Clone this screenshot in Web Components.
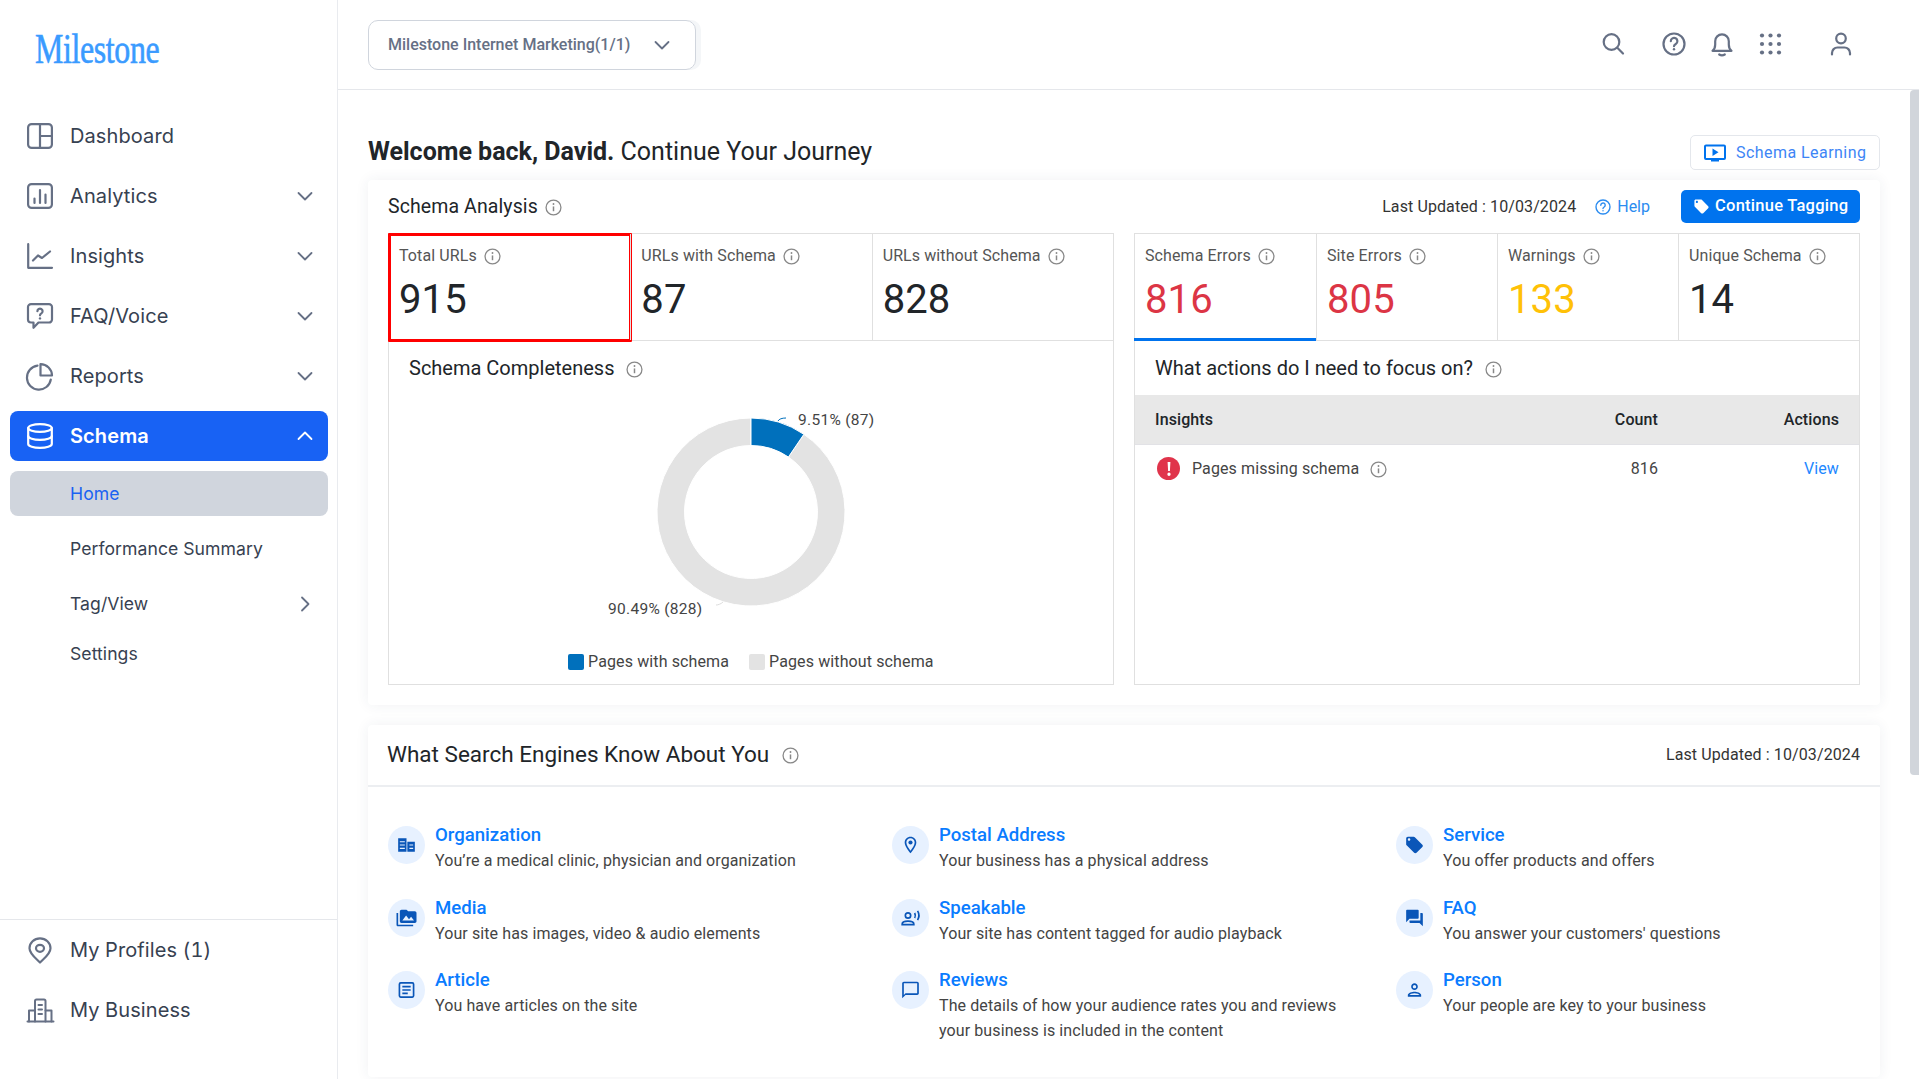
<!DOCTYPE html>
<html lang="en">
<head>
<meta charset="utf-8">
<title>Schema Home</title>
<style>
html,body{margin:0;padding:0;background:#fff;height:100%;overflow:hidden;font-family:Roboto,"Liberation Sans",sans-serif}
</style>
</head>
<body>
<ms-app>
  <ms-sidebar slot="side">
    <ms-nav-item icon="dashboard">Dashboard</ms-nav-item>
    <ms-nav-item icon="analytics" chevron="down">Analytics</ms-nav-item>
    <ms-nav-item icon="insights" chevron="down">Insights</ms-nav-item>
    <ms-nav-item icon="faq" chevron="down">FAQ/Voice</ms-nav-item>
    <ms-nav-item icon="reports" chevron="down">Reports</ms-nav-item>
    <ms-nav-item icon="schema" chevron="up" active>Schema</ms-nav-item>
    <ms-sub-item selected>Home</ms-sub-item>
    <ms-sub-item>Performance Summary</ms-sub-item>
    <ms-sub-item chevron tight>Tag/View</ms-sub-item>
    <ms-sub-item>Settings</ms-sub-item>
    <ms-nav-item slot="foot" icon="pin">My Profiles (1)</ms-nav-item>
    <ms-nav-item slot="foot" icon="business">My Business</ms-nav-item>
  </ms-sidebar>
  <ms-topbar slot="top"></ms-topbar>
  <ms-welcome></ms-welcome>
  <ms-analysis></ms-analysis>
  <ms-engines></ms-engines>
</ms-app>
<script>
const S='stroke="currentColor" fill="none" stroke-linecap="round" stroke-linejoin="round"';
const NAV={
 dashboard:`<g ${S} stroke-width="2.2"><rect x="1.1" y="1.1" width="23.8" height="23.8" rx="3.5"/><path d="M13 1.1V24.9M13 13H24.9"/></g>`,
 analytics:`<g ${S} stroke-width="2.2"><rect x="1.1" y="1.1" width="23.8" height="23.8" rx="3.5"/><path d="M7.5 15.5V20M13 7V20M18.5 11.5V20"/></g>`,
 insights:`<g ${S} stroke-width="2.2"><path d="M1.2 1.2V24.8H25"/><path d="M6 17.5L11 12.5L15 15L23 8.5"/></g>`,
 faq:`<g ${S} stroke-width="2.2"><path d="M4 1.1H22a3 3 0 0 1 3 3V16.5a3 3 0 0 1-3 3H11.5L6.5 24.8V19.5H4a3 3 0 0 1-3-3V4.1a3 3 0 0 1 3-3Z"/><path d="M10.4 8.2a2.6 2.6 0 1 1 4 2.2c-.9.6-1.4 1-1.4 1.9"/></g><circle cx="13" cy="15.4" r="1.2" fill="currentColor"/>`,
 reports:`<g ${S} stroke-width="2.2"><path d="M10.5 2.7A12 12 0 1 0 23.8 16.5"/><path d="M13.5 1.1A11.5 11.5 0 0 1 25 12.5H13.5Z"/></g>`,
 schema:`<g ${S} stroke-width="2.2"><ellipse cx="13" cy="5" rx="11.8" ry="3.9"/><path d="M1.2 5V21c0 2.2 5.3 3.9 11.8 3.9S24.8 23.2 24.8 21V5"/><path d="M1.2 13c0 2.2 5.3 3.9 11.8 3.9S24.8 15.2 24.8 13"/></g>`,
 pin:`<g ${S} stroke-width="2.2"><path d="M13 25.5C9 21.5 2.5 17 2.5 11.3a10.5 10 0 0 1 21 0C23.500 17 17 21.500 13 25.500Z"/><ellipse cx="13" cy="11.300" rx="4" ry="3.500"/></g>`,
 business:`<g ${S} stroke-width="2"><path d="M.5 24.500H26.500"/><path d="M2 24.500V13.500H8M24.500 24.500V13.500H18.500"/><path d="M8 24.500V4a1.500 1.500 0 0 1 1.500-1.500h7.500a1.500 1.500 0 0 1 1.500 1.500V24.500"/><path d="M11.500 8h3.500M11.500 12.500h3.500M11.500 17h3.500"/></g>`
};
const TOP={
 search:`<g ${S} stroke-width="2.2"><circle cx="10.500" cy="10" r="7.800"/><path d="M16.300 15.800L22 21.500"/></g>`,
 help:`<g ${S} stroke-width="2.2"><circle cx="12" cy="12" r="10.500"/><path d="M8.800 9.200a3.300 3.300 0 1 1 5 2.800c-1.100.7-1.800 1.200-1.800 2.200"/></g><circle cx="12" cy="17.200" r="1.200" fill="currentColor"/>`,
 bell:`<g ${S} stroke-width="2.2"><path d="M2.500 18.800c1.900-1.500 2.700-3.500 2.700-6.300V9.200a6.800 6.800 0 0 1 13.600 0v3.300c0 2.800.8 4.800 2.700 6.300Z"/><path d="M9.200 22.500c1.600 1 4 1 5.600 0"/></g>`,
 apps:`<g fill="currentColor">${[3,11.500,20].flatMap(y=>[3,11.500,20].map(x=>`<circle cx="${x}" cy="${y+.5}" r="2.100"/>`)).join('')}</g>`,
 user:`<g ${S} stroke-width="2.2"><circle cx="12" cy="6.500" r="4.800"/><path d="M3 22.500V21a5.500 5.500 0 0 1 5.500-5.500h7A5.500 5.500 0 0 1 21 21v1.500"/></g>`
};
const M={
 org:`<path fill="currentColor" d="M2 4h10v16H2zM13 8h9v12h-9z"/><path stroke="#e7f1ff" stroke-width="1.300" fill="none" d="M4 8h6M4 12h6M4 16h6M15.500 12h4.500M15.500 16h4.500"/>`,
 media:`<path fill="currentColor" d="M2 6H0v5h.01L0 20c0 1.100.9 2 2 2h18v-2H2V6zm20-2h-8l-2-2H6c-1.100 0-1.990.9-1.990 2L4 16c0 1.100.9 2 2 2h16c1.100 0 2-.9 2-2V6c0-1.100-.9-2-2-2zM7 15l4.500-6 3.500 4.510 2.500-3.010L21 15H7z"/>`,
 article:`<g fill="none" stroke="currentColor" stroke-width="2"><rect x="3.500" y="3.500" width="17" height="17" rx="1.500"/><path d="M7 8h10M7 12h10M7 16h6.500"/></g>`,
 place:`<path fill="currentColor" d="M12 2C8.130 2 5 5.130 5 9c0 5.250 7 13 7 13s7-7.750 7-13c0-3.870-3.130-7-7-7zm0 2c2.760 0 5 2.240 5 5 0 2.880-2.880 7.190-5 9.880C9.920 16.210 7 11.850 7 9c0-2.760 2.240-5 5-5z"/><circle cx="12" cy="9" r="2.500" fill="currentColor"/>`,
 voice:`<g fill="none" stroke="currentColor" stroke-width="2"><circle cx="9" cy="9" r="3.200"/><path d="M2 20v-.8c0-2.200 3.500-3.400 7-3.400s7 1.200 7 3.400v.8Z"/><path d="M17 6c1 1.800 1 4.200 0 6M20.500 3.500c2 3.300 2 7.700 0 11"/></g>`,
 chat:`<path fill="currentColor" d="M20 2H4c-1.100 0-2 .9-2 2v18l4-4h14c1.100 0 2-.9 2-2V4c0-1.100-.9-2-2-2zm0 14H6l-2 2V4h16v12z"/>`,
 tag:`<path fill="currentColor" d="M21.410 11.580l-9-9C12.050 2.220 11.550 2 11 2H4c-1.100 0-2 .9-2 2v7c0 .55.22 1.050.59 1.420l9 9c.36.36.86.58 1.410.58.55 0 1.050-.22 1.410-.59l7-7c.37-.36.59-.86.59-1.410 0-.55-.23-1.060-.59-1.420zM5.500 7C4.670 7 4 6.330 4 5.500S4.670 4 5.500 4 7 4.670 7 5.500 6.330 7 5.500 7z"/>`,
 qa:`<path fill="currentColor" d="M21 6h-2v9H6v2c0 .55.45 1 1 1h11l4 4V7c0-.55-.45-1-1-1zm-4 6V3c0-.55-.45-1-1-1H3c-.55 0-1 .45-1 1v14l4-4h10c.55 0 1-.45 1-1z"/>`,
 person:`<path fill="currentColor" d="M12 6c1.100 0 2 .9 2 2s-.9 2-2 2-2-.9-2-2 .9-2 2-2m0 10c2.700 0 5.800 1.290 6 2H6c.23-.72 3.310-2 6-2m0-12C9.790 4 8 5.790 8 8s1.790 4 4 4 4-1.790 4-4-1.790-4-4-4zm0 10c-2.670 0-8 1.340-8 4v2h16v-2c0-2.660-5.330-4-8-4z"/>`
};
const chev=d=>`<svg width="16" height="16" viewBox="0 0 16 16" fill="none" stroke="currentColor" stroke-width="1.800" stroke-linecap="round" stroke-linejoin="round"><path d="${{down:'M1.500 5L8 11.500L14.500 5',up:'M1.500 11L8 4.500L14.500 11',right:'M5 1.500L11.500 8L5 14.500'}[d]}"/></svg>`;
const FONT='Roboto,"Liberation Sans",sans-serif';
class Base extends HTMLElement{
  connectedCallback(){ if(!this.shadowRoot){const r=this.attachShadow({mode:'open'});r.innerHTML=`<style>${this.css()}</style>${this.html()}`;} }
  css(){return ':host{display:block}'} html(){return '<slot></slot>'}
}
customElements.define('ms-app',class extends Base{
  css(){return `:host{display:flex;height:100vh;overflow:hidden;font-family:${FONT};color:#212529;background:#fff}
  .side{width:338px;flex:none}
  .main{flex:1;min-width:0;display:flex;flex-direction:column;position:relative;overflow:hidden}
  .content{padding:45px 39px 0 30px;display:flex;flex-direction:column}
  .thumb{position:absolute;right:0;top:90px;width:9px;height:685px;background:#d1d5db;border-radius:4px 0 0 4px}`}
  html(){return `<div class="side"><slot name="side"></slot></div><div class="main"><slot name="top"></slot><div class="content"><slot></slot></div><div class="thumb"></div></div>`}
});
customElements.define('ms-sidebar',class extends Base{
  css(){return `:host{display:flex;flex-direction:column;height:100vh;box-sizing:border-box;border-right:1px solid #e9ebef;background:#fff}
  .logo{height:111px;box-sizing:border-box;padding:24px 0 0 35px;overflow:hidden}
  .logo span{display:inline-block;font:400 42px/50px "Liberation Serif",serif;color:#3a9bff;transform:scaleX(.76);transform-origin:0 0;letter-spacing:-.5px;-webkit-text-stroke:.6px #3a9bff}
  nav{flex:1;padding:0 9px 0 10px}
  .foot{height:160px;box-sizing:border-box;border-top:1px solid #e5e7eb;padding:5px 9px 0 10px}`}
  html(){return `<div class="logo"><span>Milestone</span></div><nav><slot></slot></nav><div class="foot"><slot name="foot"></slot></div>`}
});
customElements.define('ms-nav-item',class extends Base{
  css(){return `:host{display:flex;align-items:center;height:50px;margin-bottom:10px;padding:0 15px 0 17px;border-radius:8px;color:#374151;font:400 20px/1 Inter,"Liberation Sans",sans-serif;letter-spacing:.1px;font-variant-numeric:tabular-nums}
  :host([active]){background:#1862f4;color:#fff;font-weight:600}
  .ic{width:26px;height:26px;flex:none;margin-right:17px;color:#667085;overflow:visible}
  :host([active]) .ic{color:#fff}
  .t{flex:1}.c{display:flex;color:#667085}:host([active]) .c{color:#fff}`}
  html(){const c=this.getAttribute('chevron');return `<svg class="ic" viewBox="0 0 26 26">${NAV[this.getAttribute('icon')]}</svg><span class="t"><slot></slot></span>${c?`<span class="c">${chev(c)}</span>`:''}`}
});
customElements.define('ms-sub-item',class extends Base{
  css(){return `:host{display:flex;align-items:center;height:45px;margin-bottom:10px;padding:0 15px 0 60px;border-radius:8px;color:#374151;font:400 17.600px/1 Inter,"Liberation Sans",sans-serif;letter-spacing:.05px}
  :host([selected]){background:#d0d5dd;color:#1a62f2}
  :host([tight]){margin-bottom:5px}
  .t{flex:1}.c{display:flex;color:#667085}`}
  html(){return `<span class="t"><slot></slot></span>${this.hasAttribute('chevron')?`<span class="c">${chev('right')}</span>`:''}`}
});
customElements.define('ms-topbar',class extends Base{
  css(){return `:host{display:flex;align-items:center;height:90px;box-sizing:border-box;border-bottom:1px solid #e5e7eb;padding:0 66px 1px 30px;flex:none}
  .dd{width:328px;height:50px;margin-top:1px;box-sizing:border-box;border:1.500px solid #d0d5dd;border-radius:10px;box-shadow:5px 0 0 #f4f6f8;display:flex;align-items:center;justify-content:space-between;padding:0 25px 0 19px;color:#667085;font:500 16px/1 ${FONT}}
  .chev{display:flex}
  .sp{flex:1}
  svg.i{width:24px;height:24px;color:#667085;flex:none;overflow:visible}`}
  html(){const i=(n,m)=>`<svg class="i" viewBox="0 0 24 24" style="margin-left:${m}px">${TOP[n]}</svg>`;
    return `<div class="dd"><span>Milestone Internet Marketing(1/1)</span><span class="chev">${chev('down')}</span></div><div class="sp"></div>${i('search',0)}${i('help',37)}${i('bell',24)}${i('apps',25)}${i('user',46)}`}
});
customElements.define('ms-info',class extends Base{
  css(){return `:host{display:inline-flex;width:17px;height:17px;color:#888;flex:none}`}
  html(){return `<svg width="17" height="17" viewBox="0 0 16 16"><circle cx="8" cy="8" r="7" fill="none" stroke="currentColor" stroke-width="1.200"/><path d="M8 7v4.500" stroke="currentColor" stroke-width="1.400"/><circle cx="8" cy="4.700" r=".9" fill="currentColor"/></svg>`}
});
customElements.define('ms-welcome',class extends Base{
  css(){return `:host{display:flex;align-items:center;justify-content:space-between;height:35px;margin-bottom:10px}
  h1{margin:-2px 0 0;font:400 25px/1 ${FONT};color:#212529}b{font-weight:700}
  .btn{display:flex;align-items:center;box-sizing:border-box;width:190px;height:35px;border:1px solid #e4e7ec;border-radius:5px;padding-left:13px;color:#3d85f6;font:400 16px/1 ${FONT};letter-spacing:.45px}
  svg{width:22px;height:20px;margin-right:10px;color:#0073ee}`}
  html(){return `<h1><b>Welcome back, David.</b> Continue Your Journey</h1><div class="btn"><svg viewBox="0 0 22 20"><path d="M2 2.500h18a1 1 0 0 1 1 1V15a1 1 0 0 1-1 1H2a1 1 0 0 1-1-1V3.500a1 1 0 0 1 1-1Z" fill="none" stroke="currentColor" stroke-width="2"/><path d="M8.500 5.500L14.500 9.200L8.500 13Z" fill="currentColor"/><path d="M7 16.500h8v2H7z" fill="currentColor"/></svg>Schema Learning</div>`}
});
customElements.define('ms-stat',class extends Base{
  css(){return `:host{display:block;box-sizing:border-box;height:106px;padding:10px 0 0 10px;border-left:1px solid #e0e0e0;position:relative}
  :host(:first-child){border-left:0}
  .l{display:flex;align-items:center;gap:7px;height:24px;font:400 16px/24px ${FONT};color:#555;letter-spacing:.1px}
  .v{font:400 40px/47px ${FONT};margin-top:8px;letter-spacing:.1px;color:var(--c,#212529)}
  :host([active])::after{content:"";position:absolute;left:-1px;right:0;bottom:-1px;height:3px;background:#0073ee}
  :host([box])::after{content:"";position:absolute;left:-1px;right:-2px;top:-1px;bottom:-2px;border:3px solid #f00;border-radius:1px}`}
  html(){return `<div class="l"><slot></slot><ms-info></ms-info></div><div class="v" style="--c:${this.getAttribute('color')||'#212529'}">${this.getAttribute('value')}</div>`}
});
customElements.define('ms-analysis',class extends Base{
  css(){return `:host{display:block;box-sizing:border-box;height:525px;padding:10px 20px 20px;box-shadow:0 0 14px rgba(40,60,90,.07);border-radius:4px;background:#fff}
  header{display:flex;align-items:center;height:33px;margin-bottom:10px}
  h2{margin:0;font:450 19.500px/1 ${FONT};color:#212529;letter-spacing:.1px}
  h2+ms-info{margin-left:7px;margin-top:2px}
  .sp{flex:1}
  .upd{font:400 16px/1 ${FONT};color:#333;letter-spacing:.1px}
  .help{display:flex;align-items:center;gap:6px;margin-left:19px;color:#2b8cf0;font:400 16px/1 ${FONT}}
  .help svg{width:16px;height:16px}
  .cta{display:flex;align-items:center;box-sizing:border-box;margin-left:31px;width:179px;height:33px;background:#0073ee;border-radius:5px;color:#fff;padding-left:12px;font:500 16.500px/1 ${FONT};letter-spacing:.25px}
  .cta svg{width:17px;height:17px;margin-right:5px}
  .grid{display:grid;grid-template-columns:726px 726px;column-gap:20px}
  .col{display:flex;flex-direction:column;height:452px}
  .stats{display:grid;border:1px solid #e0e0e0;height:108px;box-sizing:border-box}
  .stats.a{grid-template-columns:repeat(3,1fr)}.stats.b{grid-template-columns:repeat(4,1fr)}
  .panel{flex:1;border:1px solid #e0e0e0;border-top:0;display:flex;flex-direction:column}
  .pt{display:flex;align-items:center;height:54px;padding:0 20px;font:450 20px/1 ${FONT};color:#212529;box-sizing:border-box;gap:12px}
  .pt ms-info{margin-top:2px}
  .chart{position:relative;height:200px;margin-top:17px;flex:none}
  .chart svg{display:block;margin:0 auto}
  .lab{position:absolute;font:400 15.500px/18px ${FONT};color:#444;letter-spacing:.3px}
  .legend{display:flex;align-items:center;height:20px;margin-top:40px;padding-left:179px;font:400 16px/1 ${FONT};color:#444;letter-spacing:.12px}
  .sq{width:16px;height:16px;border-radius:2px;margin-right:4px;flex:none}
  .legend .sq+span{margin-right:20px}
  .row{display:grid;grid-template-columns:1fr 130px 181px;align-items:center;padding:0 20px 0 20px}
  .th{height:50px;background:#e8e8e8;border-bottom:1px solid #e2e2e6;box-sizing:border-box;font:500 16px/1 ${FONT};color:#212529;letter-spacing:.1px}
  .td{height:46px;box-sizing:border-box;padding-top:1px;font:400 16px/1 ${FONT};color:#444;letter-spacing:.1px}
  .r{text-align:right}
  .cell{display:flex;align-items:center}
  .bang{width:23px;height:23px;border-radius:50%;background:#e0344b;color:#fff;display:flex;align-items:center;justify-content:center;margin:0 12px 0 2px}
  .cell ms-info{margin-left:11px;margin-top:1px}
  .view{color:#1e88ff}`}
  html(){
    const cx=100,cy=100,R=94,r=66.5,a=34.24*Math.PI/180;
    const p=(rad,t)=>`${(cx+rad*Math.sin(t)).toFixed(2)} ${(cy-rad*Math.cos(t)).toFixed(2)}`;
    const blue=`M${p(R,0)}A${R} ${R} 0 0 1 ${p(R,a)}L${p(r,a)}A${r} ${r} 0 0 0 ${p(r,0)}Z`;
    const grey=`M${p(R,a)}A${R} ${R} 0 1 1 ${p(R,0)}L${p(r,0)}A${r} ${r} 0 1 0 ${p(r,a)}Z`;
    return `<header><h2>Schema Analysis</h2><ms-info></ms-info><div class="sp"></div><span class="upd">Last Updated : 10/03/2024</span>
    <span class="help"><svg viewBox="0 0 16 16" fill="none" stroke="currentColor" stroke-width="1.400"><circle cx="8" cy="8" r="7"/><path d="M5.800 6.200a2.200 2.200 0 1 1 3.400 1.800c-.8.5-1.200.8-1.200 1.500" stroke-linecap="round"/><circle cx="8" cy="11.700" r=".7" fill="currentColor" stroke="none"/></svg>Help</span>
    <span class="cta"><svg viewBox="0 0 24 24">${M.tag.replace('currentColor','#fff')}</svg>Continue Tagging</span></header>
    <div class="grid">
      <div class="col">
        <div class="stats a"><ms-stat value="915" box>Total URLs</ms-stat><ms-stat value="87">URLs with Schema</ms-stat><ms-stat value="828">URLs without Schema</ms-stat></div>
        <div class="panel"><div class="pt">Schema Completeness<ms-info></ms-info></div>
          <div class="chart"><svg width="200" height="200" viewBox="0 0 200 200"><path d="${grey}" fill="#e3e3e3" stroke="#fff"/><path d="${blue}" fill="#0070bc" stroke="#fff"/><path d="M127 9c1-2 4-3 8-3" fill="none" stroke="#0070bc"/><path d="M65 193c2 0 5-1 7-3" fill="none" stroke="#ddd"/></svg>
            <span class="lab" style="left:409px;top:-1px">9.51% (87)</span><span class="lab" style="left:219px;top:188px">90.49% (828)</span></div>
          <div class="legend"><span class="sq" style="background:#0070bc"></span><span>Pages with schema</span><span class="sq" style="background:#e3e3e3"></span><span>Pages without schema</span></div>
        </div>
      </div>
      <div class="col">
        <div class="stats b"><ms-stat value="816" color="#dc3545" active>Schema Errors</ms-stat><ms-stat value="805" color="#dc3545">Site Errors</ms-stat><ms-stat value="133" color="#ffc107">Warnings</ms-stat><ms-stat value="14">Unique Schema</ms-stat></div>
        <div class="panel"><div class="pt">What actions do I need to focus on?<ms-info></ms-info></div>
          <div class="row th"><span>Insights</span><span class="r">Count</span><span class="r">Actions</span></div>
          <div class="row td"><span class="cell"><span class="bang"><svg width="4" height="14" viewBox="0 0 4 14"><path d="M.6 0h2.800l-.5 9H1.100zM2 10.600a1.600 1.600 0 1 1 0 3.300 1.600 1.600 0 0 1 0-3.300z" fill="#fff"/></svg></span>Pages missing schema<ms-info></ms-info></span><span class="r">816</span><span class="r view">View</span></div>
        </div>
      </div>
    </div>`}
});
customElements.define('ms-engine',class extends Base{
  css(){return `:host{display:flex;align-items:flex-start}
  .c{width:37px;height:38px;border-radius:50%;background:#e7f1ff;color:#0a56b8;display:flex;align-items:center;justify-content:center;margin:4px 10px 0 0;flex:none}
  svg{width:20px;height:20px;overflow:visible;transform:translateX(-.5px)}
  .t{font:500 18.600px/26px ${FONT};color:#0a7cff}
  .d{font:400 16px/25px ${FONT};color:#444;letter-spacing:.1px;max-width:410px}`}
  html(){return `<div class="c"><svg viewBox="0 0 24 24">${M[this.getAttribute('icon')]}</svg></div><div><div class="t">${this.getAttribute('name')}</div><div class="d"><slot></slot></div></div>`}
});
customElements.define('ms-engines',class extends Base{
  css(){return `:host{display:block;box-sizing:border-box;height:352px;margin-top:20px;box-shadow:0 0 14px rgba(40,60,90,.07);border-radius:4px;background:#fff}
  header{display:flex;align-items:center;height:62px;box-sizing:border-box;border-bottom:2px solid #eceef1;padding:0 20px 2px 19px}
  h2{margin:0;font:450 22.500px/1 ${FONT};color:#212529}
  h2+ms-info{margin-left:13px;margin-top:2px}
  .sp{flex:1}
  .upd{font:400 16px/1 ${FONT};color:#333;letter-spacing:.1px;margin-top:2px}
  .g{display:grid;grid-template-columns:repeat(3,504px);grid-template-rows:73px 72px auto;padding:35px 0 0 20px}`}
  html(){return `<header><h2>What Search Engines Know About You</h2><ms-info></ms-info><div class="sp"></div><span class="upd">Last Updated : 10/03/2024</span></header>
  <div class="g">
   <ms-engine icon="org" name="Organization">You’re a medical clinic, physician and organization</ms-engine>
   <ms-engine icon="place" name="Postal Address">Your business has a physical address</ms-engine>
   <ms-engine icon="tag" name="Service">You offer products and offers</ms-engine>
   <ms-engine icon="media" name="Media">Your site has images, video &amp; audio elements</ms-engine>
   <ms-engine icon="voice" name="Speakable">Your site has content tagged for audio playback</ms-engine>
   <ms-engine icon="qa" name="FAQ">You answer your customers' questions</ms-engine>
   <ms-engine icon="article" name="Article">You have articles on the site</ms-engine>
   <ms-engine icon="chat" name="Reviews">The details of how your audience rates you and reviews your business is included in the content</ms-engine>
   <ms-engine icon="person" name="Person">Your people are key to your business</ms-engine>
  </div>`}
});
</script>
</body>
</html>
